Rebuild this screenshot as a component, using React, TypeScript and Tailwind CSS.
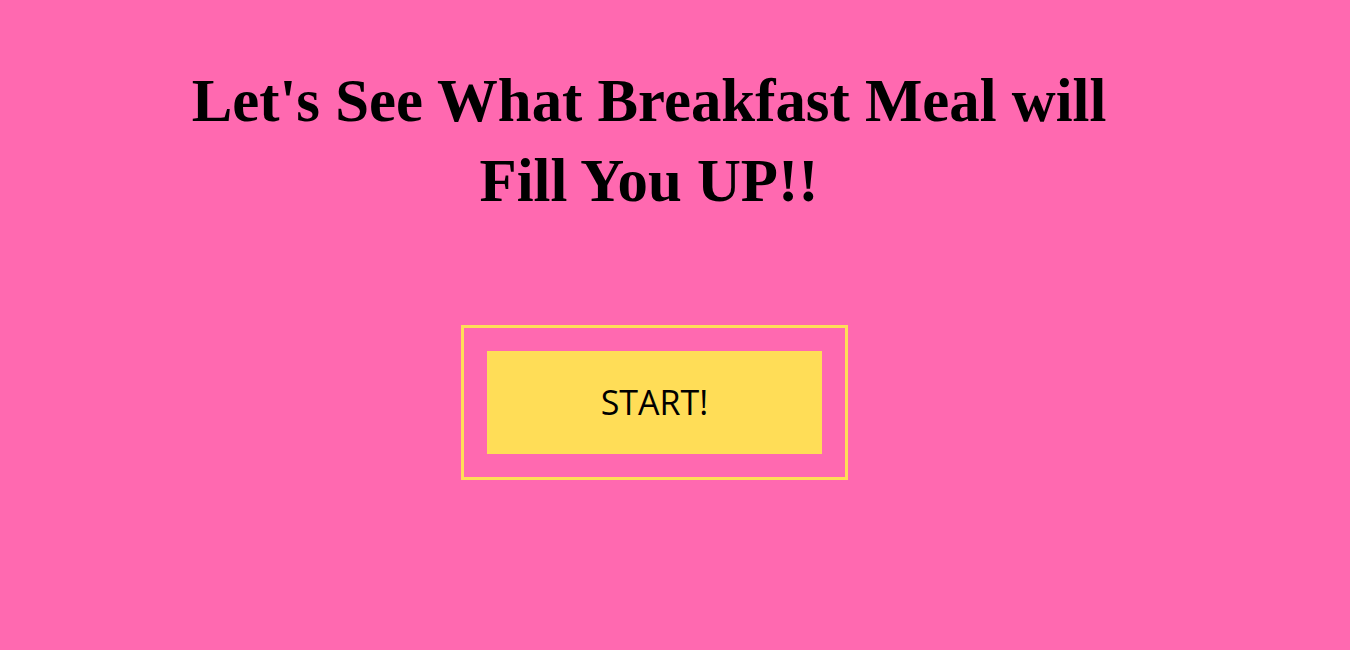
export default function App() {
  return (
    <div className="min-h-screen w-full bg-[#ff69b0] flex flex-col items-center">
      <h1 className="mt-[61px] ml-[-52px] text-center font-['Liberation_Serif',serif] font-bold text-[60.8px] leading-[80px] text-black">
        Let's See What Breakfast Meal will
        <br />
        Fill You UP!!
      </h1>
      <div className="mt-[104px] ml-[-41px] border-[3px] border-[#ffdd57] p-[23px]">
        <button className="w-[335px] h-[103px] bg-[#ffdd57] font-['Open_Sans',sans-serif] text-[34px] text-black">
          START!
        </button>
      </div>
    </div>
  )
}
